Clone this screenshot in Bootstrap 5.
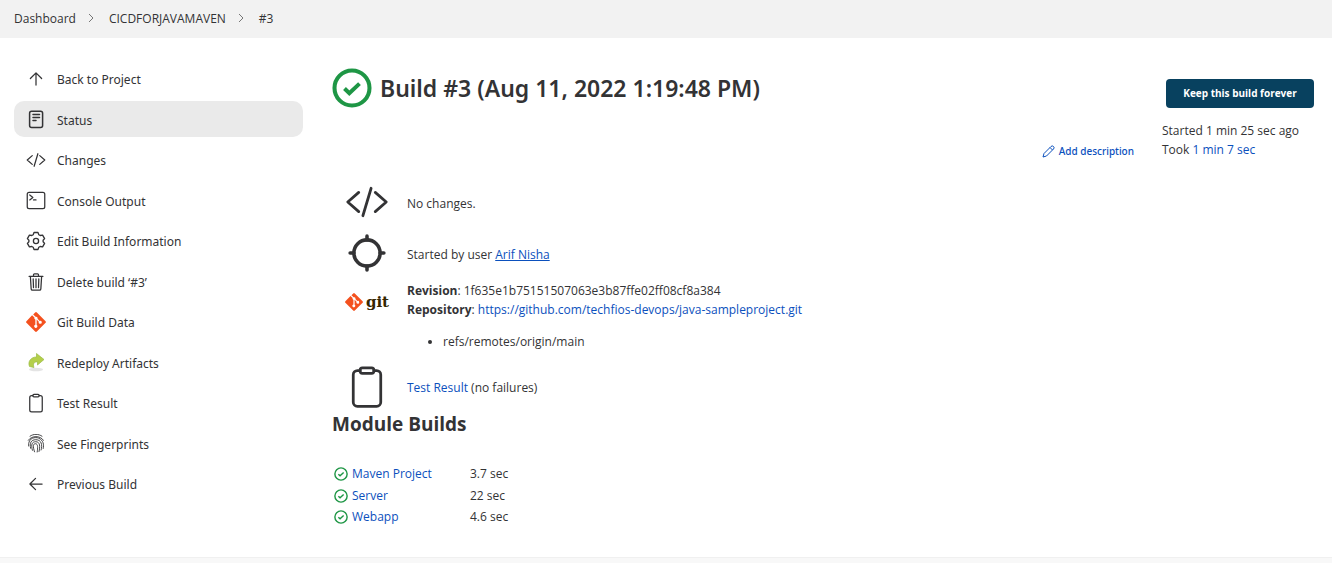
<!DOCTYPE html>
<html lang="en">
<head>
<meta charset="utf-8">
<meta name="viewport" content="width=device-width, initial-scale=1">
<title>CICDFORJAVAMAVEN #3</title>
<link href="https://cdn.jsdelivr.net/npm/bootstrap@5.3.0/dist/css/bootstrap.min.css" rel="stylesheet">
<style>
  body { font-family: "Open Sans", "Noto Sans", sans-serif; font-size: 12px; line-height: 19px; color: #333335; }
  a { color: #0b50bd; text-decoration: none; font-weight: 500; }
  svg { flex: none; display: block; }
  .line { fill: none; stroke: currentColor; stroke-width: 32; stroke-linecap: round; stroke-linejoin: round; }
  .thick .line { stroke-width: 38; }
  .topbar { background: #f2f2f2; height: 38px; padding: 0 14px 2px; }
  .topbar .breadcrumb { gap: 12px; font-size: 12px; }
  .topbar a, .tasks a { color: #333335; }
  .topbar nav div > a { margin-right: -1px; }
  .sidebar { width: 303px; padding: 22px 0 0 14px; }
  .tasks li:nth-child(even) { margin-top: 5px; }
  .tasks li:nth-child(odd) { margin-top: 4px; }
  .tasks li:first-child { margin-top: 0; }
  .tasks a { height: 36px; padding: 2px 12px 0; gap: 11px; border-radius: 10px; font-family: "Noto Sans", "Open Sans", sans-serif; font-size: 12px; font-weight: 400; }
  .tasks a.active { background: #eaeaea; }
  .content { padding: 30px 0 29px 29px; min-width: 0; }
  h1 { font-family: "Noto Sans", "Open Sans", sans-serif; font-size: 23px; line-height: 38px; font-weight: 600; gap: 8px; }
  h2 { font-size: 19px; line-height: 26px; font-weight: 700; }
  .edit { font-family: "Noto Sans", "Open Sans", sans-serif; font-size: 10px; margin-top: 34px; margin-bottom: -1px; gap: 4px; }
  .meta { width: 198px; padding: 11px 18px 0 28px; }
  .keep { background: #08415f; color: #fff; font-size: 10px; font-weight: 700; height: 29px; line-height: 16px; padding: 0 0 2px; border-radius: 4px; width: 148px; margin-bottom: 13px; }
  .keep:hover { background: #063650; color: #fff; }
  .facts { margin-top: 19px; }
  .fact { padding-left: 11px; gap: 16px; margin-bottom: 3px; }
  .fact:nth-child(n+3) { margin-bottom: 0; }
  .pic { width: 48px; height: 48px; flex: none; }
  .pic.logo { height: 42px; gap: 3px; }
  .pic.target { padding-bottom: 2px; }
  .gitword { font: 700 15px/20px "DejaVu Serif", serif; color: #362701; }
  .refs { margin: 13px 0 12px; padding-left: 36px; }
  .modules { margin-top: 26px; }
  .modules td { padding: 0; height: 22px; line-height: 20px; }
  .modules tr:nth-child(2) td { height: 21px; }
  .modules td:first-child { width: 138px; padding-left: 2px; }
  .foot { background: #f8f8f8; border-top: 1px solid #f0f0f0; min-height: 6px; }
</style>
</head>
<body class="min-vh-100 d-flex flex-column bg-white">
<svg width="0" height="0" class="position-absolute" aria-hidden="true">
  <symbol id="code" viewBox="0 0 512 512"><path class="line" d="M160 368L32 256l128-112M352 368l128-112-128-112M304 96l-96 320"/></symbol>
  <symbol id="clip" viewBox="0 0 512 512"><path class="line" d="M336 64h32a48 48 0 0148 48v320a48 48 0 01-48 48H144a48 48 0 01-48-48V112a48 48 0 0148-48h32"/><rect class="line" x="176" y="32" width="160" height="64" rx="26"/></symbol>
  <symbol id="gitmark" viewBox="0 0 92 92"><path fill="#f4511e" d="M90 42L50 2a6 6 0 00-8 0l-9 9 11 11a7 7 0 019 9l10 10a7 7 0 11-4 4L49 35v25a7 7 0 11-6-1V34a7 7 0 01-4-9L28 15 2 42a6 6 0 000 8l40 40a6 6 0 008 0l40-40a6 6 0 000-8z"/></symbol>
  <symbol id="ok" viewBox="0 0 512 512"><circle cx="256" cy="256" r="224" fill="none" stroke="#1e9645" stroke-width="52"/><path d="M160 262l62 60 130-122" fill="none" stroke="#1e9645" stroke-width="52"/></symbol>
</svg>

<header class="topbar d-flex align-items-center">
  <nav aria-label="breadcrumb">
    <div class="breadcrumb mb-0 align-items-center">
      <a href="#">Dashboard</a>
      <svg width="10" height="12" viewBox="0 0 10 12"><path d="M2 2l4 4-4 4" fill="none" stroke="#777"/></svg>
      <a href="#">CICDFORJAVAMAVEN</a>
      <svg width="10" height="12" viewBox="0 0 10 12"><path d="M2 2l4 4-4 4" fill="none" stroke="#777"/></svg>
      <a href="#">#3</a>
    </div>
  </nav>
</header>

<div class="d-flex">
  <aside class="sidebar flex-shrink-0">
    <ul class="tasks list-unstyled mb-0">
      <li><a href="#" class="d-flex align-items-center"><svg width="20" height="20" viewBox="0 0 512 512"><path class="line" d="M112 244l144-144 144 144M256 120v292"/></svg>Back to Project</a></li>
      <li><a href="#" class="d-flex align-items-center active" aria-current="page"><svg width="20" height="20" viewBox="0 0 20 20" fill="none" stroke="currentColor" stroke-width="1.5" stroke-linecap="round"><rect x="3.6" y="1.2" width="13" height="16.4" rx="2"/><path d="M7 4.600h6.500M7 7.600h6.500M7 10.600h3"/></svg>Status</a></li>
      <li><a href="#" class="d-flex align-items-center"><svg width="20" height="20"><use href="#code"/></svg>Changes</a></li>
      <li><a href="#" class="d-flex align-items-center"><svg width="20" height="20" viewBox="0 0 512 512"><rect class="line" x="32" y="36" width="448" height="416" rx="48"/><path class="line" d="M96 100l80 64-80 64M192 228h64"/></svg>Console Output</a></li>
      <li><a href="#" class="d-flex align-items-center"><svg width="20" height="20" viewBox="0 0 20 20" fill="none" stroke="currentColor" stroke-width="1.3" stroke-linejoin="round"><circle cx="10" cy="10" r="2.6"/><path d="M8 1.500h4l.8 2.200 1.400.8 2.400-.4 2 3.500-1.500 1.700v1.400l1.500 1.700-2 3.500-2.400-.4-1.400.8-.8 2.200H8l-.8-2.200-1.400-.8-2.400.4-2-3.500 1.500-1.700V9.300L1.400 7.600l2-3.500 2.400.4 1.400-.8z"/></svg>Edit Build Information</a></li>
      <li><a href="#" class="d-flex align-items-center"><svg width="20" height="20" viewBox="0 0 512 512"><path class="line" d="M112 112l20 320c1 18 14 32 32 32h184c18 0 31-14 32-32l20-320M80 112h352M192 112V72a24 24 0 0124-24h80a24 24 0 0124 24v40M256 176v224M184 176l8 224M328 176l-8 224"/></svg>Delete build ‘#3’</a></li>
      <li><a href="#" class="d-flex align-items-center"><svg width="20" height="20"><use href="#gitmark"/></svg>Git Build Data</a></li>
      <li><a href="#" class="d-flex align-items-center"><svg width="20" height="20" viewBox="0 0 20 20"><ellipse cx="10" cy="16.500" rx="7" ry="1.8" fill="#e4e4e4"/><path d="M10.500.500l7.500 6-6.500 5.500V9C8.500 8.500 6.500 10.500 8 14.500L3.500 13.500C1.500 8.500 5 4 10.500 4z" fill="#b4cf4a" stroke="#9aba45" stroke-width=".7"/></svg>Redeploy Artifacts</a></li>
      <li><a href="#" class="d-flex align-items-center"><svg width="20" height="20"><use href="#clip"/></svg>Test Result</a></li>
      <li><a href="#" class="d-flex align-items-center"><svg width="20" height="20" viewBox="0 0 20 20" fill="none" stroke="currentColor" stroke-width=".9" stroke-linecap="round"><path d="M4 2.200C7.500-.3 12.500-.3 16 2.200M2.300 6.300C5.500 1.300 14.500 1.300 17.400 6.300M2.600 12C1.800 3 10 3 12.500 4.100c5 2.200 5.600 6.600 4.700 10.400M4.600 14.300C3.400 9 5 5.800 9.800 5.700c5.700 0 6.800 5.200 5.300 10.300M6.400 16.300C4.800 10.200 6 7.800 9.800 7.700c4.600.2 4.300 5.200 3.200 9.800M8.500 17.800C6.700 12 7 9.800 9.500 9.700c2.700.2 2.300 4.200 1.700 8.300"/></svg>See Fingerprints</a></li>
      <li><a href="#" class="d-flex align-items-center"><svg width="20" height="20" viewBox="0 0 512 512"><path class="line" d="M244 400L100 256l144-144M120 256h292"/></svg>Previous Build</a></li>
    </ul>
  </aside>

  <main class="content flex-grow-1">
    <div class="d-flex align-items-start">
      <div class="flex-grow-1">
        <h1 class="d-flex align-items-center mb-0"><svg width="40" height="40"><use href="#ok"/></svg>Build #3 (Aug 11, 2022 1:19:48 PM)</h1>
        <div class="d-flex justify-content-end">
          <a href="#" class="edit d-flex align-items-center"><svg width="13" height="13" viewBox="0 0 13 13" fill="none" stroke="currentColor" stroke-linejoin="round"><path d="M1 12l1-3.500L9 1.500a1.600 1.600 0 012.500 2.500L4.500 11zM8 2.500L10.500 5"/></svg>Add description</a>
        </div>
      </div>
      <div class="meta flex-shrink-0">
        <div class="d-flex justify-content-end"><button type="button" class="btn keep flex-shrink-0">Keep this build forever</button></div>
        <div class="text-nowrap">Started 1 min 25 sec ago</div>
        <div>Took <a href="#">1 min 7 sec</a></div>
      </div>
    </div>

    <div class="facts">
      <div class="fact d-flex align-items-center">
        <div class="pic thick target d-flex align-items-center justify-content-center"><svg width="44" height="44"><use href="#code"/></svg></div>
        <div>No changes.</div>
      </div>
      <div class="fact d-flex align-items-center">
        <div class="pic thick target d-flex align-items-center"><svg width="48" height="48" viewBox="0 0 512 512"><circle class="line" cx="256" cy="256" r="140"/><path class="line" d="M256 76v40M256 396v40M76 256h40M396 256h40"/></svg></div>
        <div>Started by user <a href="#" class="text-decoration-underline">Arif Nisha</a></div>
      </div>
      <div class="fact d-flex">
        <div class="pic logo d-flex align-items-center justify-content-center"><svg width="18" height="18"><use href="#gitmark"/></svg><span class="gitword">git</span></div>
        <div>
          <div><b>Revision</b>: 1f635e1b75151507063e3b87ffe02ff08cf8a384</div>
          <div><b>Repository</b>: <a href="#">https://github.com/techfios-devops/java-sampleproject.git</a></div>
          <ul class="refs"><li>refs/remotes/origin/main</li></ul>
        </div>
      </div>
      <div class="fact d-flex align-items-center">
        <div class="pic thick d-flex align-items-center justify-content-center"><svg width="44" height="44"><use href="#clip"/></svg></div>
        <div><a href="#">Test Result</a> (no failures)</div>
      </div>
    </div>

    <h2 class="mb-0">Module Builds</h2>
    <table class="modules">
      <tbody>
        <tr><td><a href="#" class="d-flex align-items-center gap-1"><svg width="14" height="14"><use href="#ok"/></svg>Maven Project</a></td><td>3.7 sec</td></tr>
        <tr><td><a href="#" class="d-flex align-items-center gap-1"><svg width="14" height="14"><use href="#ok"/></svg>Server</a></td><td>22 sec</td></tr>
        <tr><td><a href="#" class="d-flex align-items-center gap-1"><svg width="14" height="14"><use href="#ok"/></svg>Webapp</a></td><td>4.6 sec</td></tr>
      </tbody>
    </table>
  </main>
</div>
<footer class="foot flex-grow-1"></footer>
<script src="https://cdn.jsdelivr.net/npm/bootstrap@5.3.0/dist/js/bootstrap.bundle.min.js"></script>
</body>
</html>
